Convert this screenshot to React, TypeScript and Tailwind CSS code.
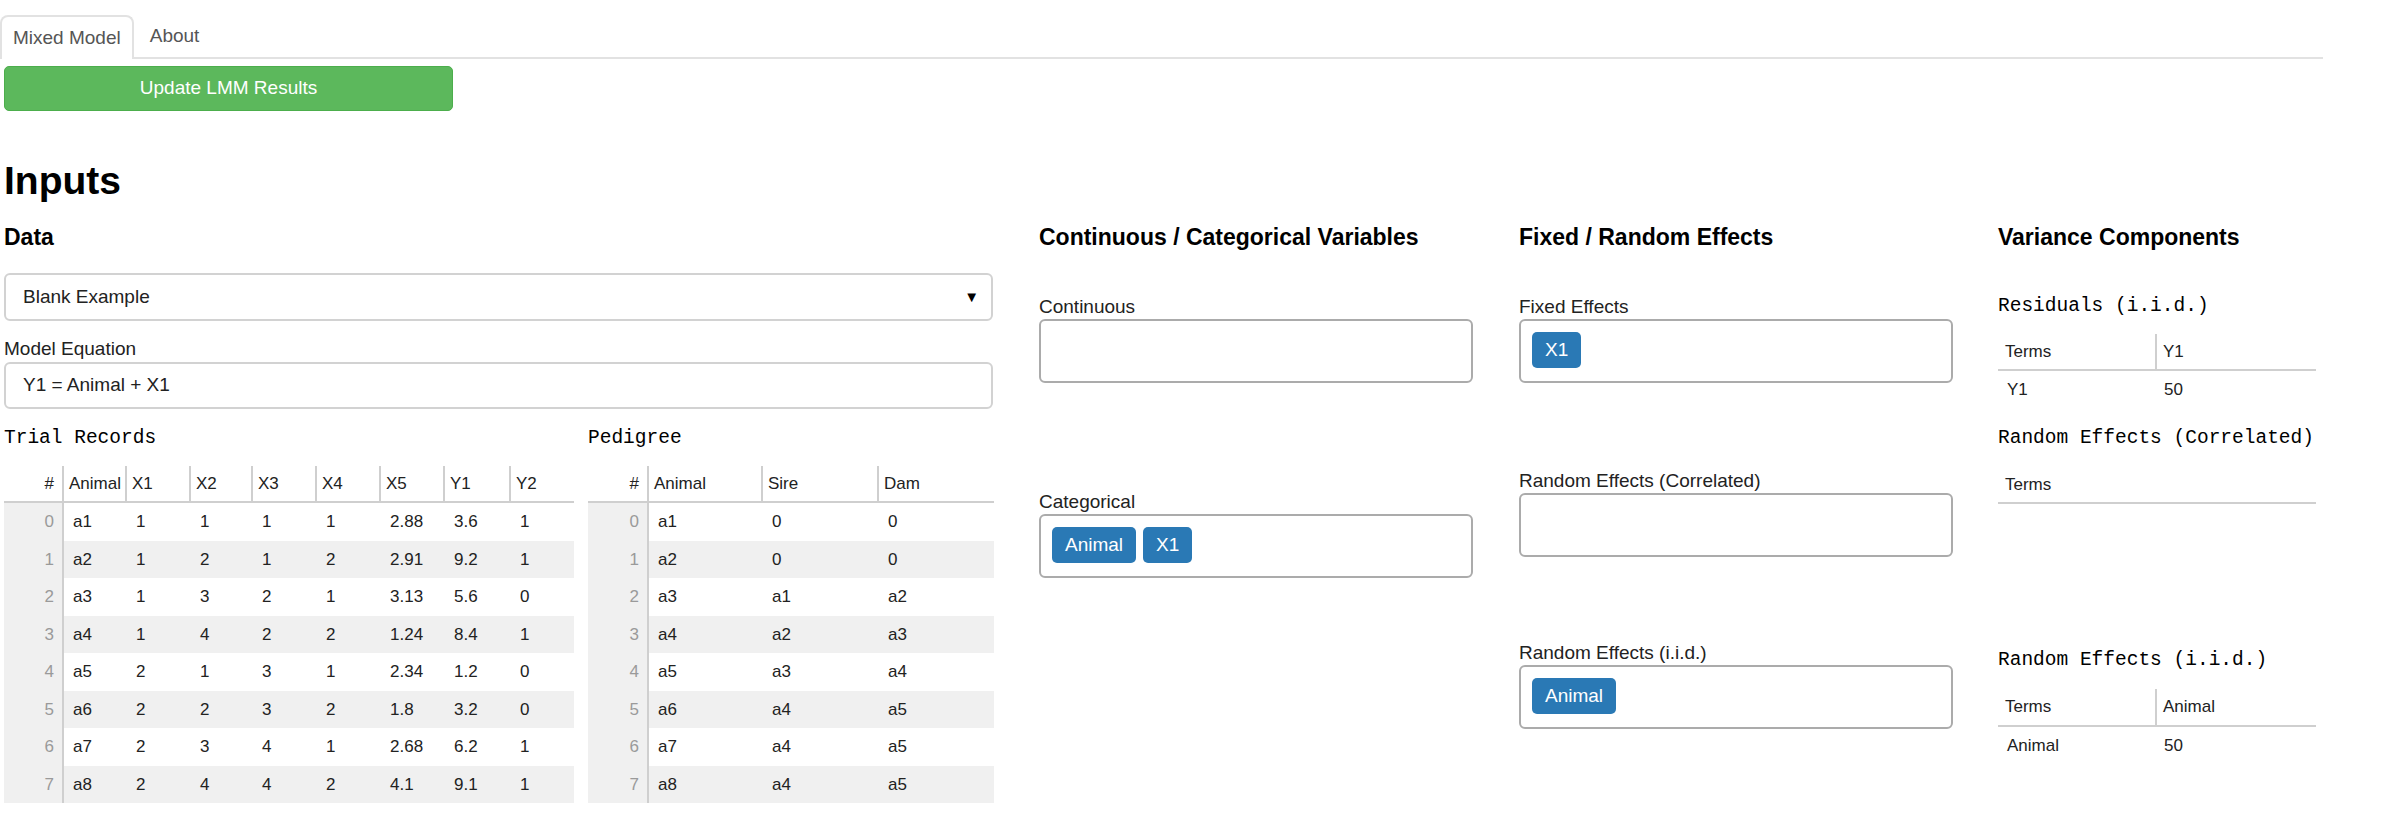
import React from "react";

const sans = "font-['Liberation_Sans',Arial,sans-serif]";
const mono = "font-['Liberation_Mono','Courier_New',monospace]";

interface GridCol {
  name: string;
  w: string;
}

const trialCols: GridCol[] = [
  { name: "Animal", w: "w-[63px]" },
  { name: "X1", w: "w-[64px]" },
  { name: "X2", w: "w-[62px]" },
  { name: "X3", w: "w-[64px]" },
  { name: "X4", w: "w-[64px]" },
  { name: "X5", w: "w-[64px]" },
  { name: "Y1", w: "w-[66px]" },
  { name: "Y2", w: "w-[65px]" },
];

const trialRows = [
  ["a1", "1", "1", "1", "1", "2.88", "3.6", "1"],
  ["a2", "1", "2", "1", "2", "2.91", "9.2", "1"],
  ["a3", "1", "3", "2", "1", "3.13", "5.6", "0"],
  ["a4", "1", "4", "2", "2", "1.24", "8.4", "1"],
  ["a5", "2", "1", "3", "1", "2.34", "1.2", "0"],
  ["a6", "2", "2", "3", "2", "1.8", "3.2", "0"],
  ["a7", "2", "3", "4", "1", "2.68", "6.2", "1"],
  ["a8", "2", "4", "4", "2", "4.1", "9.1", "1"],
];

const pedigreeCols: GridCol[] = [
  { name: "Animal", w: "w-[114px]" },
  { name: "Sire", w: "w-[116px]" },
  { name: "Dam", w: "w-[117px]" },
];

const pedigreeRows = [
  ["a1", "0", "0"],
  ["a2", "0", "0"],
  ["a3", "a1", "a2"],
  ["a4", "a2", "a3"],
  ["a5", "a3", "a4"],
  ["a6", "a4", "a5"],
  ["a7", "a4", "a5"],
  ["a8", "a4", "a5"],
];

function DataGrid({
  cols,
  rows,
  idxW,
}: {
  cols: GridCol[];
  rows: string[][];
  idxW: string;
}) {
  return (
    <div className="text-[17px] text-[#222]">
      <div className="flex h-[37px] border-b-2 border-[#cfcfcf]">
        <div className={`${idxW} flex items-center justify-end pr-[8px]`}>#</div>
        {cols.map((c) => (
          <div
            key={c.name}
            className={`${c.w} flex items-center border-l-2 border-[#cfcfcf] pl-[5px]`}
          >
            {c.name}
          </div>
        ))}
      </div>
      {rows.map((r, i) => (
        <div
          key={i}
          className={`flex h-[37.5px] items-center ${i % 2 === 1 ? "bg-[#f0f0f0]" : "bg-white"}`}
        >
          <div
            className={`${idxW} flex h-full items-center justify-end bg-[#f0f0f0] pr-[8px] text-[#9a9a9a]`}
          >
            {i}
          </div>
          {r.map((v, j) => (
            <div
              key={j}
              className={`${cols[j].w} flex h-full items-center pl-[9px] ${j === 0 ? "border-l-2 border-[#cfcfcf]" : "border-l-2 border-transparent"}`}
            >
              {v}
            </div>
          ))}
        </div>
      ))}
    </div>
  );
}

function Chip({ label }: { label: string }) {
  return (
    <span className="flex h-[36px] items-center rounded-[5px] bg-[#2a79b5] px-[13px] text-[19px] text-white">
      {label}
    </span>
  );
}

function DropBox({ chips = [] }: { chips?: string[] }) {
  return (
    <div className="flex h-[64px] w-full items-start gap-[7px] rounded-[6px] border-2 border-[#ababab] pl-[11px] pt-[11px]">
      {chips.map((c) => (
        <Chip key={c} label={c} />
      ))}
    </div>
  );
}

function VarTable({
  terms,
  value,
  headH = "h-[37px]",
}: {
  terms: string[];
  value?: string[];
  headH?: string;
}) {
  return (
    <div className="w-[318px] text-[17px] text-[#222]">
      <div className={`flex ${headH} border-b-2 border-[#cfcfcf]`}>
        <div className="flex w-[157px] items-center pl-[7px]">{terms[0]}</div>
        {terms[1] && (
          <div className="flex items-center border-l-2 border-[#cfcfcf] pl-[6px]">
            {terms[1]}
          </div>
        )}
      </div>
      {value && (
        <div className="flex h-[38px] items-center">
          <div className="w-[157px] pl-[9px]">{value[0]}</div>
          <div className="pl-[9px]">{value[1]}</div>
        </div>
      )}
    </div>
  );
}

export default function App() {
  return (
    <div className={`${sans} min-h-screen bg-white text-[19px] text-[#222]`}>
      <div className="flex w-[2323px] items-end border-b-2 border-[#e2e2e2] pt-[15px]">
        <div className="-mb-[2px] flex h-[44px] items-center rounded-t-[8px] border-2 border-b-0 border-[#e2e2e2] bg-white px-[11px] text-[#555]">
          Mixed Model
        </div>
        <div className="flex h-[42px] items-center px-[16px] text-[#555]">About</div>
      </div>

      <div className="pl-[4px]">
        <button className="mt-[7px] flex h-[45px] w-[449px] items-center justify-center rounded-[5px] border border-[#4cae4c] bg-[#5cb85c] text-[19px] text-white">
          Update LMM Results
        </button>

        <h2 className="mt-[48px] text-[39px] font-bold leading-[43px] text-black">Inputs</h2>

        <div className="mt-[23px] flex items-start">
          {/* data */}
          <div className="w-[989px]">
            <h4 className="text-[23px] font-bold leading-[25px] text-black">Data</h4>
            <div className="mt-[23px] flex h-[48px] items-center justify-between rounded-[6px] border-2 border-[#d2d2d2] pl-[17px] pr-[12px]">
              <span>Blank Example</span>
              <span className="text-[15px] text-black">▼</span>
            </div>
            <div className="mt-[16px] leading-[24px]">Model Equation</div>
            <div className="mt-[1px] flex h-[47px] items-center rounded-[6px] border-2 border-[#d2d2d2] pl-[17px]">
              Y1 = Animal + X1
            </div>
            <div className="mt-[17px] flex gap-[14px]">
              <div className="w-[570px]">
                <div className={`${mono} text-[19.5px] leading-[24px] text-black`}>Trial Records</div>
                <div className="mt-[16px]">
                  <DataGrid cols={trialCols} rows={trialRows} idxW="w-[58px]" />
                </div>
              </div>
              <div className="w-[406px]">
                <div className={`${mono} text-[19.5px] leading-[24px] text-black`}>Pedigree</div>
                <div className="mt-[16px]">
                  <DataGrid cols={pedigreeCols} rows={pedigreeRows} idxW="w-[59px]" />
                </div>
              </div>
            </div>
          </div>

          {/* variables */}
          <div className="ml-[46px] w-[434px]">
            <h4 className="text-[23px] font-bold leading-[25px] text-black">
              Continuous / Categorical Variables
            </h4>
            <div className="mt-[45px] leading-[24px]">Continuous</div>
            <DropBox />
            <div className="mt-[107px] leading-[24px]">Categorical</div>
            <DropBox chips={["Animal", "X1"]} />
          </div>

          {/* effects */}
          <div className="ml-[46px] w-[434px]">
            <h4 className="text-[23px] font-bold leading-[25px] text-black">Fixed / Random Effects</h4>
            <div className="mt-[45px] leading-[24px]">Fixed Effects</div>
            <DropBox chips={["X1"]} />
            <div className="mt-[86px] leading-[24px]">Random Effects (Correlated)</div>
            <DropBox />
            <div className="mt-[84px] leading-[24px]">Random Effects (i.i.d.)</div>
            <DropBox chips={["Animal"]} />
          </div>

          {/* variance */}
          <div className="ml-[45px] w-[340px]">
            <h4 className="text-[23px] font-bold leading-[25px] text-black">Variance Components</h4>
            <div className={`${mono} mt-[44px] text-[19.5px] leading-[24px] text-black`}>
              Residuals (i.i.d.)
            </div>
            <div className="mt-[16px]">
              <VarTable terms={["Terms", "Y1"]} value={["Y1", "50"]} />
            </div>
            <div className={`${mono} mt-[17px] text-[19.5px] leading-[24px] text-black`}>
              Random Effects (Correlated)
            </div>
            <div className="mt-[17px]">
              <VarTable terms={["Terms"]} />
            </div>
            <div className={`${mono} mt-[144px] text-[19.5px] leading-[24px] text-black`}>
              Random Effects (i.i.d.)
            </div>
            <div className="mt-[17px]">
              <VarTable terms={["Terms", "Animal"]} value={["Animal", "50"]} headH="h-[38px]" />
            </div>
          </div>
        </div>
      </div>
    </div>
  );
}
